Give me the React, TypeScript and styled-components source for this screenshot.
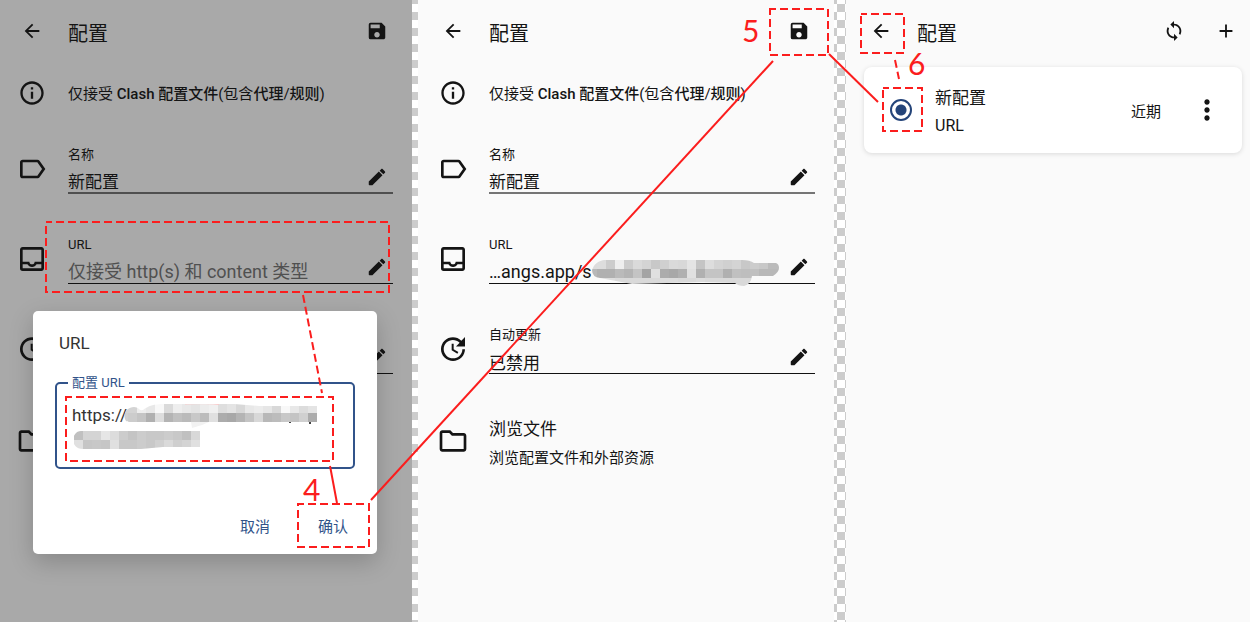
import React from "react";
import styled, { createGlobalStyle } from "styled-components";
import {
  MdArrowBack, MdSave, MdOutlineInfo, MdLabelOutline, MdUpdate, MdOutlineFolder,
  MdSync, MdAdd, MdMoreVert, MdOutlineInbox,
} from "react-icons/md";

const Global = createGlobalStyle`
  * { box-sizing: border-box; }
  body { margin: 0; font-family: Roboto, "Noto Sans CJK SC", sans-serif; color: #141414; background: #fafafa; }
  button { border: 0; padding: 0; background: none; font: inherit; color: inherit; display: grid; place-items: center; }
  input, textarea { font: inherit; color: inherit; }
`;

const Page = styled.main`
  position: relative;
  display: grid;
  grid-template-columns: minmax(0, 412fr) 6px minmax(0, 416fr) 12px minmax(0, 404fr);
  min-height: 100vh;
`;
const Gutter = styled.div<{ $shift: number }>`
  background: repeating-conic-gradient(#ccc 0 25%, #fff 0 50%) ${(p) => p.$shift}px 4px / 16px 16px;
`;
const Screen = styled.section<{ $dim?: boolean; $start?: number; $end?: number }>`
  position: relative;
  padding: 0 ${(p) => p.$end ?? 19}px 0 ${(p) => p.$start ?? 0}px;
  background: ${(p) => (p.$dim ? "#a9a9a9" : "#fafafa")};
`;
const Bar = styled.header`
  display: grid;
  grid-template-columns: 64px 1fr auto;
  align-items: center;
  height: 62px;
`;
const Title = styled.h1`
  margin: 6px 0 0 4px;
  font-size: 20px;
  line-height: 28px;
  font-weight: 400;
`;
const Action = styled.button`
  width: 32px;
  height: 32px;
  font-size: 22px;
`;
const EditButton = styled(Action)`
  height: 22px;
`;
const MenuButton = styled(Action)`
  font-size: 32px;
`;
const Row = styled.div<{ $h: number }>`
  display: grid;
  grid-template-columns: 64px minmax(0, 1fr);
  align-items: center;
  gap: 4px;
  height: ${(p) => p.$h}px;
`;
const Lead = styled.span<{ $size?: number }>`
  display: grid;
  place-items: center;
  font-size: ${(p) => p.$size ?? 32}px;
`;
const Note = styled.p`
  margin: 2px 0 0;
  font-size: 15px;
  line-height: 20px;
  white-space: nowrap;
  b { font-weight: 500; }
`;
const Field = styled.div<{ $soft?: boolean }>`
  position: relative;
  display: grid;
  grid-template-columns: minmax(0, 1fr) 32px;
  grid-template-rows: 22px 1fr;
  height: 50px;
  border-bottom: ${(p) => (p.$soft ? "2px solid #0008" : "1px solid #111")};
`;
const Label = styled.label<{ $covered?: boolean }>`
  grid-column: 1 / 3;
  font-size: 13px;
  line-height: 22px;
  visibility: ${(p) => (p.$covered ? "hidden" : "visible")};
`;
const Value = styled.input<{ $latin?: boolean; $covered?: boolean }>`
  align-self: end;
  width: 100%;
  height: 24px;
  border: 0;
  padding: 0;
  outline: 0;
  background: none;
  font-size: ${(p) => (p.$latin ? 18 : 17)}px;
  visibility: ${(p) => (p.$covered ? "hidden" : "visible")};
  &::placeholder { color: #505050; opacity: 1; }
`;
const Files = styled.div<{ $covered?: boolean }>`
  margin-top: 4px;
  font-size: 17px;
  line-height: 24px;
  visibility: ${(p) => (p.$covered ? "hidden" : "visible")};
  small { display: block; margin-top: 6px; font-size: 15px; line-height: 22px; }
`;

const Dialog = styled.div`
  position: absolute;
  top: 311px;
  left: 33px;
  right: 35px;
  padding: 20px 22px 10px;
  border-radius: 5px;
  background: #fff;
  box-shadow: 0 8px 24px #0003;
`;
const Heading = styled.h2`
  margin: 0 0 18px 4px;
  font-size: 17px;
  line-height: 24px;
  font-weight: 400;
  color: #333;
`;
const Outline = styled.fieldset`
  margin: 0;
  padding: 10px 16px 8px 15px;
  border: 2px solid #31538a;
  border-radius: 5px;
  legend { margin-left: -4px; padding: 0 4px; font-size: 13px; line-height: 20px; color: #31538a; }
`;
const AreaBox = styled.div`
  position: relative;
`;
const Area = styled.textarea`
  display: block;
  width: 100%;
  height: 56px;
  border: 0;
  padding: 0;
  outline: 0;
  resize: none;
  background: none;
  font-size: 17px;
  line-height: 24px;
  color: #333;
`;
const Buttons = styled.div`
  display: flex;
  justify-content: flex-end;
  gap: 14px;
  margin: 39px -10px 2px 0;
`;
const TextButton = styled.button`
  width: 64px;
  height: 34px;
  font-size: 15px;
  color: #31538a;
`;

const Tools = styled.div`
  display: flex;
  gap: 20px;
`;
const Card = styled.article`
  display: grid;
  grid-template-columns: 71px 1fr auto 62px;
  align-items: center;
  height: 86px;
  padding-right: 19px;
  margin: 5px 0 0 15px;
  border-radius: 8px;
  background: #fff;
  box-shadow: 0 1px 5px #0002;
  ${MenuButton} { justify-self: end; }
`;
const Radio = styled.input`
  appearance: none;
  width: 22px;
  height: 22px;
  margin: 0 0 0 26px;
  border: 2px solid #244479;
  border-radius: 50%;
  background: radial-gradient(circle, #244479 5px, transparent 6px);
`;
const Profile = styled.label`
  margin-top: 4px;
  font-size: 17px;
  line-height: 28px;
  small { display: block; font-size: 16px; }
`;
const Age = styled.span`
  font-size: 15px;
`;

const Mask = styled.svg<{ $x: number; $y: number }>`
  position: absolute;
  left: ${(p) => p.$x}px;
  top: ${(p) => p.$y}px;
  pointer-events: none;
`;
const Marks = styled.svg`
  position: absolute;
  top: 0;
  left: 0;
  width: 100%;
  fill: none;
  stroke: #fb1d1d;
  stroke-width: 2;
  pointer-events: none;
  text { fill: #fb1d1d; stroke: none; font-family: Lato, sans-serif; font-size: 30px; }
`;

const Pencil = () => (
  <svg width="22" height="22" viewBox="0 0 24 24" fill="currentColor">
    <path d="M3 17v3.300c0 .4.3.7.7.7H7L18 10l-4-4zM20.700 7.300c.4-.4.4-1 0-1.400l-2.600-2.600c-.4-.4-1-.4-1.400 0L14.900 5.100l4 4z" />
  </svg>
);

/* Rows of grey shades, one two-digit hex level per 9px block */
const Blocks = ({ x, rows }: { x: number; rows: string[] }) => (
  <>
    {rows.map((row, r) =>
      row.split(" ").map((level, c) => (
        <rect key={r + "-" + c} x={x + c * 9} y={r * 9} width="9" height="9" fill={"#" + level.repeat(3)} shapeRendering="crispEdges" />
      )),
    )}
  </>
);

const DialogMask = () => (
  <Mask $x={52} $y={1} width="196" height="48">
    <clipPath id="dm-top"><path d="M1 15C-1 8 4 3 10 3C15 3 15 7 19 6C24 2 30 0 40 0H110L135 2H193V18H8C4 18 2 18 1 15Z" /></clipPath>
    <g clipPath="url(#dm-top)">
      <Blocks x={-5} rows={[
        "d4 d4 ee e8 f8 da ee e8 e4 ec f0 de e4 d8 e8 ec e6 d8 f8 e8 dc e4",
        "d0 cc c4 b0 dd b4 c0 ba c8 bc e0 ac a8 b4 c4 d8 b8 bc c8 c4 d0 ac",
      ]} />
    </g>
    <path d="M67 18h18l-7 3l-10 3z" fill="#f2f2f2" />
    <path d="M165 18h2v1h-2zM185 18h2v2h-2z" fill="#444" />
    <path d="M61 0Q85 -1 95 0.500" stroke="#fbc8c8" fill="none" />
  </Mask>
);
const DialogMaskLower = () => (
  <Mask $x={1} $y={28} width="128" height="20">
    <clipPath id="dm-low"><path d="M8 0H127V16H90L68 18H10C3 18 0 13 0 9S3 0 8 0Z" /></clipPath>
    <g clipPath="url(#dm-low)">
      <Blocks x={1} rows={[
        "c0 d4 d4 e6 dc cc c4 cc c8 c8 cc c8 c0 d8",
        "e0 c6 c8 c6 e0 c8 c8 cc c8 d0 da cf d4 e0",
      ]} />
    </g>
  </Mask>
);
const FieldMask = () => (
  <Mask $x={103} $y={26} width="190" height="28">
    <clipPath id="fm"><path d="M0 10C2 4 6 1 12 0H150Q158 0 162 3H184Q187 4 187 8T181 16L160 16Q159 24 152 26Q146 26 143 23L110 22L40 24L24 21L8 18Q0 17 0 10Z" /></clipPath>
    <g clipPath="url(#fm)">
      <Blocks x={-4} rows={[
        "dc dd cc ee cc da d4 c8 d0 da d8 e4 c4 dd d4 d0 d4 c8 cc c8 bb bb",
        "b8 b0 b0 ba b4 c4 a4 e0 ac a8 b0 e0 b0 c4 c4 b0 c0 be c0 b8 b8 b8",
        "dd dd dd d9 d9 d9 d9 d9 dc dc d9 d9 dc d9 d9 d9 d9 d9 d9 d9 d9 d9",
      ]} />
    </g>
  </Mask>
);

type FieldProps = {
  id: string; label: string; value?: string; hint?: string;
  soft?: boolean; latin?: boolean; covered?: boolean; children?: React.ReactNode;
};
const SettingsField = ({ id, label, value, hint, soft, latin, covered, children }: FieldProps) => (
  <Field $soft={soft}>
    <Label htmlFor={id} $covered={covered}>{label}</Label>
    <Value id={id} readOnly value={value ?? ""} placeholder={hint} $latin={latin} $covered={covered} />
    <EditButton aria-label={"编辑" + label}><Pencil /></EditButton>
    {children}
  </Field>
);

type SettingsProps = { prefix: string; url?: string; hint?: string; mask?: React.ReactNode; covered?: boolean };
const Settings = ({ prefix, url, hint, mask, covered }: SettingsProps) => (
  <>
    <Bar>
      <Lead><Action aria-label="返回"><MdArrowBack /></Action></Lead>
      <Title>配置</Title>
      <Action aria-label="保存"><MdSave /></Action>
    </Bar>
    <Row $h={62}>
      <Lead $size={28}><MdOutlineInfo /></Lead>
      <Note>仅接受 <b>Clash 配置文件</b>(包含<b>代理</b>/<b>规则</b>)</Note>
    </Row>
    <Row $h={90}>
      <Lead><MdLabelOutline /></Lead>
      <SettingsField id={prefix + "name"} label="名称" value="新配置" soft />
    </Row>
    <Row $h={90}>
      <Lead><MdOutlineInbox /></Lead>
      <SettingsField id={prefix + "url"} label="URL" value={url} hint={hint} latin>{mask}</SettingsField>
    </Row>
    <Row $h={90}>
      <Lead><MdUpdate /></Lead>
      <SettingsField id={prefix + "update"} label="自动更新" value="已禁用" covered={covered} />
    </Row>
    <Row $h={94}>
      <Lead><MdOutlineFolder /></Lead>
      <Files $covered={covered}>浏览文件<small>浏览配置文件和外部资源</small></Files>
    </Row>
  </>
);

const Box = ({ x, y, w, h }: { x: number; y: number; w: number; h: number }) => (
  <rect x={x} y={y} width={w} height={h} strokeDasharray="8 4" strokeDashoffset="2" />
);

export default function App() {
  return (
    <>
      <Global />
      <Page>
        <Screen $dim>
          <Settings prefix="edit-" hint="仅接受 http(s) 和 content 类型" covered />
          <Dialog role="dialog" aria-label="URL">
            <Heading>URL</Heading>
            <Outline>
              <legend>配置 URL</legend>
              <AreaBox>
                <Area aria-label="配置 URL" readOnly value="https://" />
                <DialogMask />
                <DialogMaskLower />
              </AreaBox>
            </Outline>
            <Buttons><TextButton>取消</TextButton><TextButton>确认</TextButton></Buttons>
          </Dialog>
        </Screen>
        <Gutter $shift={0} />
        <Screen $start={3}>
          <Settings prefix="saved-" url="…angs.app/s" mask={<FieldMask />} />
        </Screen>
        <Gutter $shift={-5} />
        <Screen $start={3} $end={8}>
          <Bar>
            <Lead><Action aria-label="返回"><MdArrowBack /></Action></Lead>
            <Title>配置</Title>
            <Tools>
              <Action aria-label="更新"><MdSync /></Action>
              <Action aria-label="新建"><MdAdd /></Action>
            </Tools>
          </Bar>
          <Card>
            <Radio type="radio" id="profile" defaultChecked />
            <Profile htmlFor="profile">新配置<small>URL</small></Profile>
            <Age>近期</Age>
            <MenuButton aria-label="更多"><MdMoreVert /></MenuButton>
          </Card>
        </Screen>
        <Marks viewBox="0 0 1250 622">
          <Box x={46} y={222} w={343} h={70} />
          <path d="M303 295L322 393" strokeDasharray="8 4" />
          <Box x={66} y={397} w={267} h={64} />
          <path d="M330 466L337 503" />
          <Box x={298} y={504} w={71} h={43} />
          <path d="M371 500L773 61" />
          <Box x={770} y={9} w={58} h={46} />
          <path d="M829 54L878 102" />
          <Box x={861} y={14} w={43} h={39} />
          <path d="M895 60L899 79" strokeDasharray="8 4" />
          <Box x={883} y={88} w={39} h={43} />
          <text x="303" y="501">4</text>
          <text x="742" y="42">5</text>
          <text x="908" y="75">6</text>
        </Marks>
      </Page>
    </>
  );
}
